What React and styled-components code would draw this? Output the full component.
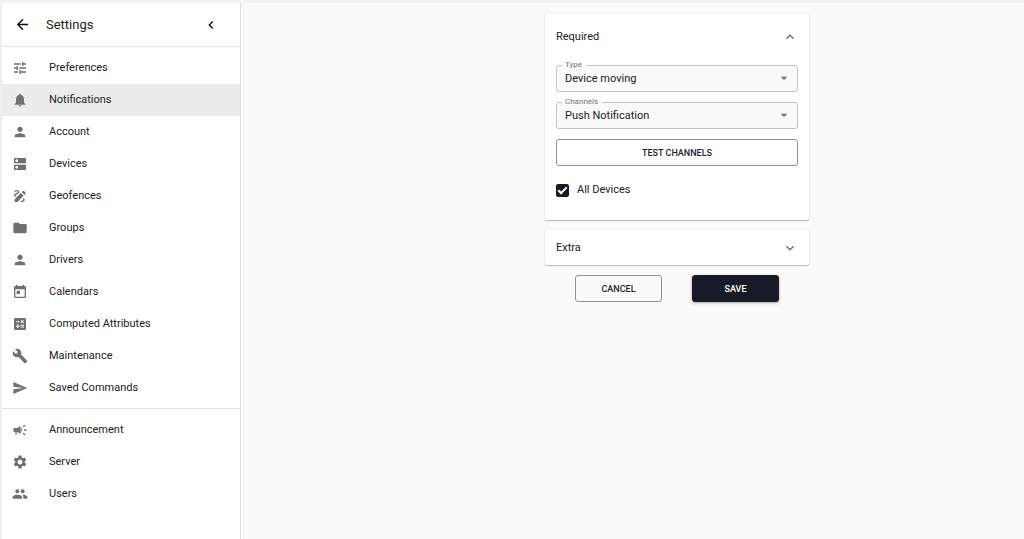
import React, { useState } from 'react';
import styled, { createGlobalStyle, css } from 'styled-components';
import {
  MdArrowBack,
  MdArrowDropDown,
  MdBuild,
  MdCalculate,
  MdCampaign,
  MdChevronLeft,
  MdDns,
  MdDraw,
  MdExpandLess,
  MdExpandMore,
  MdFolder,
  MdNotifications,
  MdPeople,
  MdPerson,
  MdSend,
  MdSettings,
  MdToday,
  MdTune,
} from 'react-icons/md';

const GlobalStyle = createGlobalStyle`
  *, *::before, *::after { box-sizing: border-box; }
  body {
    margin: 0;
    background: #fafafa;
    color: #212121;
    font-family: Roboto, "Liberation Sans", sans-serif;
    font-size: 11px;
    line-height: 16px;
  }
  button, select { font: inherit; color: inherit; }
`;

const Page = styled.div`
  display: flex;
  min-height: 100vh;
  border-top: 3px solid #f4f4f4;
`;

const Sidebar = styled.aside`
  flex: 0 0 241px;
  background: #fff;
  border-left: 2px solid #eee;
  border-right: 1px solid #e2e2e2;
  border-top-left-radius: 4px;
`;

const SidebarHeader = styled.header`
  display: flex;
  align-items: center;
  height: 44px;
  padding: 0 21px 0 12px;
  border-bottom: 1px solid #e2e2e2;
`;

const IconButton = styled.button`
  display: flex;
  padding: 0;
  border: 0;
  background: none;
  color: #111;
  font-size: ${({ $size }) => $size || 16}px;
`;

const Title = styled.h1`
  flex: 1;
  margin: 0 0 0 15px;
  font-size: 13px;
  font-weight: 400;
`;

const MenuList = styled.ul`
  margin: 0;
  padding: 5px 0 4px;
  list-style: none;

  & + & { border-top: 1px solid #e2e2e2; }
`;

const MenuLink = styled.a`
  display: flex;
  align-items: center;
  gap: 21px;
  height: 32px;
  padding: 0 10px;
  color: inherit;
  text-decoration: none;
  ${({ $active }) => $active && css`background: #ececec;`}

  svg { color: #707070; font-size: 16px; }
`;

const Main = styled.main`
  flex: 1;
  padding: 11px 0 16px 89px;
`;

const Form = styled.form`
  width: 264px;
  margin: 0 auto;
`;

const Panel = styled.section`
  margin-bottom: 10px;
  background: #fff;
  border-radius: 2px;
  box-shadow: 0 1px 1px rgba(0, 0, 0, 0.24), 0 0 2px rgba(0, 0, 0, 0.1);
`;

const PanelHeader = styled.button`
  display: flex;
  align-items: center;
  justify-content: space-between;
  width: 100%;
  height: ${({ $open }) => ($open ? 45 : 35)}px;
  padding: 0 11px;
  border: 0;
  background: none;

  svg { color: #707070; font-size: 16px; }
`;

const PanelBody = styled.div`
  display: flex;
  flex-direction: column;
  gap: 4px;
  padding: 0 11px 14px;
`;

const FieldSet = styled.fieldset`
  position: relative;
  min-width: 0;
  margin: 0;
  padding: 0;
  border: 1px solid #c4c4c4;
  border-radius: 3px;
  background: #fafafa;
`;

const Legend = styled.legend`
  margin-left: 5px;
  padding: 0 4px 0 3px;
  color: #707070;
  font-size: 8px;
  line-height: 12px;
`;

const Select = styled.select`
  display: block;
  width: 100%;
  height: 20px;
  padding: 0 24px 4px 8px;
  border: 0;
  outline: 0;
  background: none;
  appearance: none;
`;

const SelectArrow = styled(MdArrowDropDown)`
  position: absolute;
  right: 5px;
  bottom: 5px;
  color: #707070;
  font-size: 16px;
  pointer-events: none;
`;

const Button = styled.button`
  height: 27px;
  padding: 0 10px;
  border: 1px solid #909297;
  border-radius: 3px;
  background: transparent;
  color: #1a1f2b;
  font-size: 9px;
  font-weight: 500;
  text-transform: uppercase;
  ${({ $filled }) => $filled && css`
    border-color: #171b26;
    background: #171b26;
    color: #fff;
    box-shadow: 0 1px 3px rgba(0, 0, 0, 0.35);
  `}
`;

const TestButton = styled(Button)`
  margin-top: 6px;
`;

const CheckLabel = styled.label`
  display: flex;
  align-items: center;
  gap: 8px;
  height: 32px;
  margin-top: 4px;
`;

const Checkbox = styled.input`
  display: grid;
  place-items: center;
  width: 13px;
  height: 13px;
  margin: 0;
  border: 1px solid #171b26;
  border-radius: 2px;
  appearance: none;

  &:checked {
    background: #171b26;
  }

  &:checked::after {
    content: '';
    width: 9px;
    height: 5px;
    margin-bottom: 2px;
    border: solid #fff;
    border-width: 0 0 2px 2px;
    transform: rotate(-45deg);
  }
`;

const Actions = styled.div`
  display: flex;
  justify-content: space-evenly;

  ${Button} { width: 87px; }
`;

const primaryItems = [
  ['Preferences', MdTune],
  ['Notifications', MdNotifications],
  ['Account', MdPerson],
  ['Devices', MdDns],
  ['Geofences', MdDraw],
  ['Groups', MdFolder],
  ['Drivers', MdPerson],
  ['Calendars', MdToday],
  ['Computed Attributes', MdCalculate],
  ['Maintenance', MdBuild],
  ['Saved Commands', MdSend],
];

const adminItems = [
  ['Announcement', MdCampaign],
  ['Server', MdSettings],
  ['Users', MdPeople],
];

function Menu({ items, active }) {
  return (
    <MenuList>
      {items.map(([label, Icon]) => (
        <li key={label}>
          <MenuLink
            href={`#${label.toLowerCase().replace(' ', '-')}`}
            $active={label === active}
            aria-current={label === active ? 'page' : undefined}
          >
            <Icon aria-hidden="true" />
            {label}
          </MenuLink>
        </li>
      ))}
    </MenuList>
  );
}

function SelectField({ id, label, options }) {
  return (
    <FieldSet>
      <Legend>
        <label htmlFor={id}>{label}</label>
      </Legend>
      <Select id={id}>
        {options.map((option) => (
          <option key={option}>{option}</option>
        ))}
      </Select>
      <SelectArrow aria-hidden="true" />
    </FieldSet>
  );
}

function Accordion({ title, defaultOpen = false, children }) {
  const [open, setOpen] = useState(defaultOpen);
  return (
    <Panel>
      <PanelHeader type="button" $open={open} aria-expanded={open} onClick={() => setOpen(!open)}>
        {title}
        {open ? <MdExpandLess aria-hidden="true" /> : <MdExpandMore aria-hidden="true" />}
      </PanelHeader>
      {open && children && <PanelBody>{children}</PanelBody>}
    </Panel>
  );
}

export default function App() {
  return (
    <>
      <GlobalStyle />
      <Page>
        <Sidebar>
          <SidebarHeader>
            <IconButton type="button" aria-label="Back" $size={17}><MdArrowBack /></IconButton>
            <Title>Settings</Title>
            <IconButton type="button" aria-label="Collapse menu"><MdChevronLeft /></IconButton>
          </SidebarHeader>
          <nav>
            <Menu items={primaryItems} active="Notifications" />
            <Menu items={adminItems} />
          </nav>
        </Sidebar>
        <Main>
          <Form onSubmit={(event) => event.preventDefault()}>
            <Accordion title="Required" defaultOpen>
              <SelectField id="type" label="Type" options={['Device moving']} />
              <SelectField id="channels" label="Channels" options={['Push Notification']} />
              <TestButton type="button">Test Channels</TestButton>
              <CheckLabel>
                <Checkbox type="checkbox" defaultChecked />
                All Devices
              </CheckLabel>
            </Accordion>
            <Accordion title="Extra" />
            <Actions>
              <Button type="button">Cancel</Button>
              <Button type="submit" $filled>Save</Button>
            </Actions>
          </Form>
        </Main>
      </Page>
    </>
  );
}
